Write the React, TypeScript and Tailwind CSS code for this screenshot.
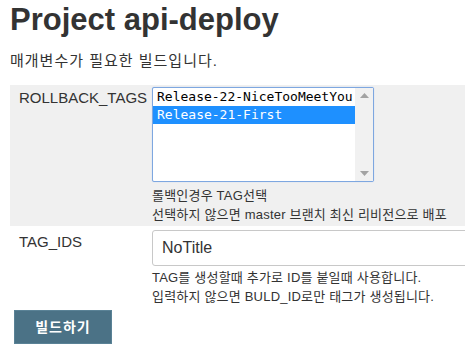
import React from "react";

const sans = { fontFamily: '"Liberation Sans", Arial, "Noto Sans CJK KR", sans-serif' };
const mono = { fontFamily: '"DejaVu Sans Mono", "Liberation Mono", "Noto Sans CJK KR", monospace' };

export default function App() {
  return (
    <div className="w-[465px] h-[352px] overflow-hidden bg-white text-[#333]" style={sans}>
      <div className="pl-[10px]">
        <h1 className="text-[31px] leading-[38px] font-bold pt-[1px] whitespace-nowrap">Project api-deploy</h1>
        <p className="text-[15px] leading-[20px] mt-[12px] tracking-[1px]">매개변수가 필요한 빌드입니다.</p>

        <div className="mt-[14px] w-[460px] bg-[#f0f0f0] flex pt-[2px] pb-[2px]">
          <div className="w-[142px] shrink-0 pl-[9px] pt-[2px] text-[15px] leading-[18px]">ROLLBACK_TAGS</div>
          <div className="flex flex-col">
            <div className="w-[222px] h-[95px] bg-white border border-[#7ea7e0] rounded-[2px] flex shadow-[0_0_1px_#9ebef0]">
              <div className="flex-1 text-[13px] leading-[18px]" style={mono}>
                <div className="pl-[4px] text-black">Release-22-NiceTooMeetYou</div>
                <div className="pl-[4px] text-white bg-[#1e90ff]">Release-21-First</div>
              </div>
              <div className="w-[18px] bg-[#f1f1f1] flex flex-col items-center justify-between py-[5px]">
                <svg width="9" height="5" viewBox="0 0 9 5"><path d="M0 5 L4.5 0 L9 5 Z" fill="#a3a3a3" /></svg>
                <svg width="9" height="5" viewBox="0 0 9 5"><path d="M0 0 L4.5 5 L9 0 Z" fill="#a3a3a3" /></svg>
              </div>
            </div>
            <div className="text-[13px] leading-[19px] mt-[4px] whitespace-nowrap tracking-[0.2px]">
              <div>롤백인경우 TAG선택</div>
              <div>선택하지 않으면 master 브랜치 최신 리비전으로 배포</div>
            </div>
          </div>
        </div>

        <div className="flex mt-[4px]">
          <div className="w-[142px] shrink-0 pl-[9px] pt-[3px] text-[15px] leading-[18px]">TAG_IDS</div>
          <div className="flex flex-col">
            <div className="w-[320px] h-[36px] border border-[#c8c8c8] rounded-[3px] bg-white flex items-center pl-[9px] text-[16px]">
              NoTitle
            </div>
            <div className="text-[13px] leading-[19px] mt-[2px] whitespace-nowrap tracking-[0.2px]">
              <div>TAG를 생성할때 추가로 ID를 붙일때 사용합니다.</div>
              <div>입력하지 않으면 BULD_ID로만 태그가 생성됩니다.</div>
            </div>
          </div>
        </div>

        <button className="mt-[4px] ml-[4px] w-[98px] h-[34px] bg-[#4b7286] text-white text-[14px] font-bold border border-[#5a8296] tracking-[1px]">
          빌드하기
        </button>
      </div>
    </div>
  );
}
